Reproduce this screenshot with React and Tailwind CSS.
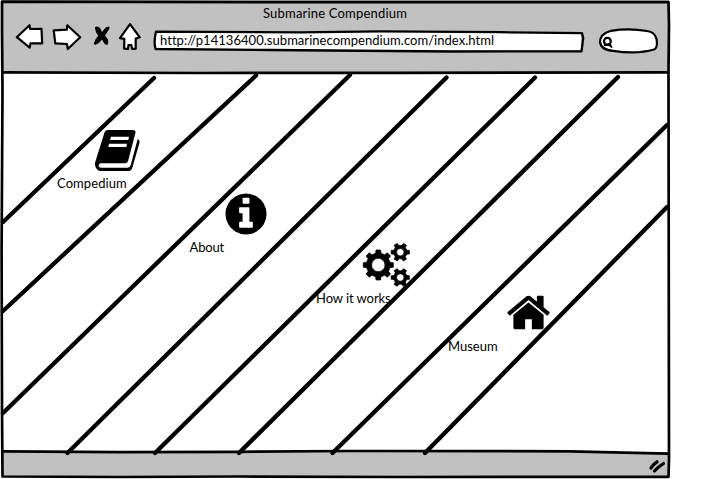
import React from "react";

const FONT = "font-['Lato','Open_Sans',sans-serif]";

function gear(cx, cy, outer, root, hole, teeth, offset) {
  const step = (Math.PI * 2) / teeth;
  const pts = [];
  for (let i = 0; i < teeth; i++) {
    const a = offset + i * step;
    [[-0.29, root], [-0.19, outer], [0.19, outer], [0.29, root]].forEach(([k, r]) => {
      pts.push(`${(cx + r * Math.cos(a + k * step)).toFixed(2)} ${(cy + r * Math.sin(a + k * step)).toFixed(2)}`);
    });
  }
  return `M${pts.join("L")}Z M${cx - hole} ${cy}a${hole} ${hole} 0 1 0 ${hole * 2} 0a${hole} ${hole} 0 1 0 ${-hole * 2} 0Z`;
}

const BookIcon = () => (
  <svg className="ml-[37px] block h-[44px] w-[46px]" viewBox="0 0 138 132">
    <path d="M42 9H116Q127 9 124 19L102 103Q100 109 93 109H20Q13 110 14 117Q15 122 22 122H101Q108 122 110 115L131 36Q139 40 136 49L115 122Q112 132 101 132H22Q11 132 6 122Q1 113 4 104L31 18Q34 9 42 9Z" fill="#000" />
    <path d="M51 29H105L103 39H48ZM45 50H99L97 60H43Z" fill="#fff" />
  </svg>
);

const InfoIcon = () => (
  <svg className="ml-[33px] block h-[48px] w-[48px]" viewBox="0 0 1792 1792">
    <path d="M1152 1376v-160q0-14-9-23t-23-9h-96v-512q0-14-9-23t-23-9h-320q-14 0-23 9t-9 23v160q0 14 9 23t23 9h96v320h-96q-14 0-23 9t-9 23v160q0 14 9 23t23 9h448q14 0 23-9t9-23zm-128-896v-160q0-14-9-23t-23-9h-192q-14 0-23 9t-9 23v160q0 14 9 23t23 9h192q14 0 23-9t9-23zm640 416q0 209-103 385.5t-279.5 279.5-385.5 103-385.5-103-279.5-279.5-103-385.5 103-385.5 279.5-279.5 385.5-103 385.5 103 279.5 279.5 103 385.5z" />
  </svg>
);

const GearsIcon = () => (
  <svg className="ml-[46px] block h-[46px] w-[50px]" viewBox="0 0 50 46">
    <g fillRule="evenodd" stroke="#000" strokeWidth="0.7" strokeLinejoin="round">
      <path d={gear(16.3, 23, 15.2, 12, 6.7, 8, -Math.PI / 2)} />
      <path d={gear(38.3, 10.2, 9.3, 6.8, 3.7, 6, 0)} />
      <path d={gear(38.3, 35.5, 9.3, 6.8, 3.7, 6, 0)} />
    </g>
  </svg>
);

const HouseIcon = () => (
  <svg className="ml-[57px] block h-[47px] w-[47px]" viewBox="0 0 1792 1792">
    <path d="M1472 992v480q0 26-19 45t-45 19h-384v-384h-256v384h-384q-26 0-45-19t-19-45v-480q0-1 .5-3t.5-3l575-474 575 474q1 2 1 6zm223-69l-62 74q-8 9-21 11h-3q-13 0-21-7l-692-577-692 577q-12 8-24 7-13-2-21-11l-62-74q-8-10-7-23.5t11-21.5l719-599q32-26 76-26t76 26l244 204v-195q0-14 9-23t23-9h192q14 0 23 9t9 23v408l219 182q10 8 11 21.5t-7 23.5z" />
  </svg>
);

const NavIcons = () => (
  <svg className="ml-[12px] mt-[22px] block h-[30px] w-[130px] shrink-0" viewBox="14 22 130 30" fill="#fff" stroke="#000" strokeWidth="2.2" strokeLinejoin="round" strokeLinecap="round">
    <path d="M16.8 37.2L29.5 25.2L30.2 29L41.5 28.8L42.2 43.3L30.5 43.3L29.7 47.6Z" />
    <path d="M53.7 30.4L66.9 29.7L67.3 25.3L80.2 37.3L67.8 49L66.9 44L55.3 43.4Z" />
    <path d="M95 27Q98 25.5 100 28L102 32L106 27.3L109.5 26.5Q110 28 108 31L105 35.5Q108 38 108.3 42.5L107.3 45Q104.5 45 102 39.5Q99.5 43.5 95 45L93.8 43.5Q95 39 98.3 35.5Q95 32 95 27Z" fill="#000" stroke="none" />
    <path d="M130 24.2L139.8 37.3L135.7 38.6L135.7 48.7L132.2 49L131.3 45L128.5 45L128 49L124.2 48.7L124.3 38.8L120 38.1Z" />
  </svg>
);

const SearchBox = () => (
  <svg className="ml-[16px] mt-[27px] block h-[28px] w-[62px] shrink-0" viewBox="597 27 62 28" strokeLinecap="round">
    <path d="M611 30.8Q629 27.8 647 31Q655 32 656.5 39Q658 48 654 49.5Q637 54.5 613 50.8Q601 50 600 42Q600 34 611 30.8Z" fill="#fff" stroke="#000" strokeWidth="2.2" />
    <circle cx="607.4" cy="41.3" r="3.4" fill="none" stroke="#000" strokeWidth="2.2" />
    <path d="M604.5 45H608.5L611.3 46.5M609.5 43.5L611.5 47" fill="none" stroke="#000" strokeWidth="1.8" />
  </svg>
);

function MenuItem({ className, label, labelClass, children }) {
  return (
    <a className={`block shrink-0 ${className}`}>
      {children}
      <span className={`block whitespace-nowrap leading-4 ${labelClass}`}>{label}</span>
    </a>
  );
}

const stripes = [
  [154, 78, 3, 222], [256, 75.5, 3, 311], [350, 75, 3, 413], [446.5, 77.5, 67.5, 453],
  [535, 77.5, 155, 453], [618, 77, 239, 453], [667, 125, 332.5, 453], [667, 207, 425, 453],
];

export default function App() {
  return (
    <div className={`relative h-[479px] w-[723px] overflow-hidden bg-white text-[13px] text-black ${FONT}`}>
      <div className="ml-[2px] flex h-[477px] w-[667px] flex-col">
        <header className="h-[73px] bg-[#c1c1c1] pt-1">
          <h1 className="ml-[261px] h-[18px] whitespace-nowrap text-[13px] leading-[18px] tracking-[0.19px]">Submarine Compendium</h1>
          <div className="-mt-[22px] flex items-start">
            <NavIcons />
            <div className="ml-[11px] mt-[32px] flex h-[18px] w-[426px] shrink-0 items-center bg-white pl-[5px]">
              <span className="whitespace-nowrap tracking-[0.04px]">http://p14136400.submarinecompendium.com/index.html</span>
            </div>
            <SearchBox />
          </div>
        </header>
        <main className="flex min-h-0 flex-1 items-start bg-white">
          <MenuItem className="ml-[55px] mt-[54px] w-[90px]" label="Compedium" labelClass="mt-[4px] tracking-[0.08px]"><BookIcon /></MenuItem>
          <MenuItem className="ml-[42px] mt-[117px] w-[90px]" label="About" labelClass="mt-[1px] pl-[0.5px] tracking-[-0.15px]"><InfoIcon /></MenuItem>
          <MenuItem className="ml-[37px] mt-[169px] w-[100px]" label="How it works" labelClass="mt-[2px] tracking-[-0.08px]"><GearsIcon /></MenuItem>
          <MenuItem className="ml-[32px] mt-[216px] w-[105px]" label="Museum" labelClass="mt-[2px] tracking-[0px]"><HouseIcon /></MenuItem>
        </main>
        <footer className="h-[25px] bg-[#c1c1c1]" />
      </div>
      <svg className="pointer-events-none absolute left-0 top-0 h-[479px] w-[723px]" viewBox="0 0 723 479" fill="none" stroke="#000" strokeLinecap="round" strokeLinejoin="round">
        <g strokeWidth="4.3">
          {stripes.map(([x1, y1, x2, y2]) => <line key={`${x1}-${x2}`} x1={x1} y1={y1} x2={x2} y2={y2} />)}
        </g>
        <g strokeWidth="2.7">
          <path d="M2 1.7L260 2.2L668.5 2L669 25L668.5 72L669 460L668.5 476.8L400 477L240 476.5L120 477L2.5 476.5L2 410L1.6 250L2.5 90L2 30Z" />
          <path d="M2.5 72.3L200 73L400 72.8L668 72.3M2.5 451.3L120 452.2L240 451.8L350 451L570 451.3L668 453.6" />
        </g>
        <path d="M156 31.7L300 32.3L380 31.3L500 32.2L582 33.2L583.2 38L581.5 51.3L450 51.5L270 50L155.5 49Q153.5 42 156 31.7Z" strokeWidth="2.3" />
        <path d="M651 468Q653 464.5 657 461.8M654.5 471Q658 467 663.5 463.5" strokeWidth="3.2" />
      </svg>
    </div>
  );
}
